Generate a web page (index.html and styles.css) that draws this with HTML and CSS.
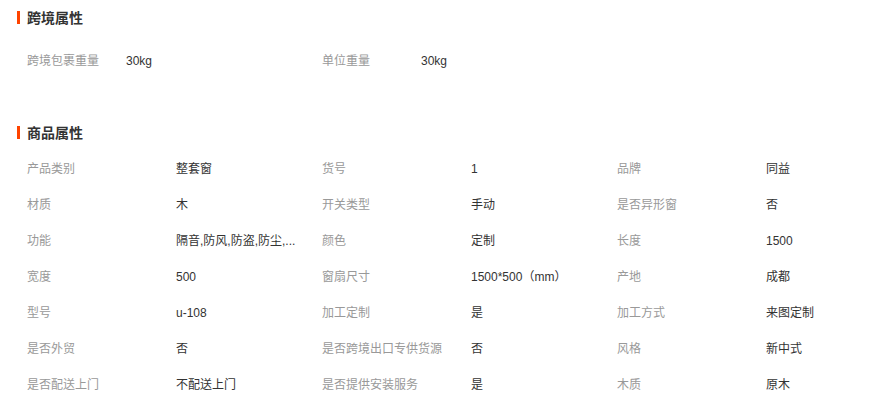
FILE: index.html
```html
<!DOCTYPE html>
<html lang="zh-CN">

<head>
    <meta charset="UTF-8">
    <title>商品属性</title>
    <link rel="stylesheet" href="styles.css">
</head>

<body>
    <div class="section">
        <h3 class="title">跨境属性</h3>
        <div class="attr-list cross">
            <div class="attr"><span class="label">跨境包裹重量</span><span class="value">30kg</span></div>
            <div class="attr"><span class="label">单位重量</span><span class="value">30kg</span></div>
        </div>
    </div>

    <div class="section">
        <h3 class="title">商品属性</h3>
        <div class="attr-list">
            <div class="attr"><span class="label">产品类别</span><span class="value">整套窗</span></div>
            <div class="attr"><span class="label">货号</span><span class="value">1</span></div>
            <div class="attr"><span class="label">品牌</span><span class="value">同益</span></div>

            <div class="attr"><span class="label">材质</span><span class="value">木</span></div>
            <div class="attr"><span class="label">开关类型</span><span class="value">手动</span></div>
            <div class="attr"><span class="label">是否异形窗</span><span class="value">否</span></div>

            <div class="attr"><span class="label">功能</span><span class="value" title="隔音,防风,防盗,防尘,防水,保温">隔音,防风,防盗,防尘,...</span></div>
            <div class="attr"><span class="label">颜色</span><span class="value">定制</span></div>
            <div class="attr"><span class="label">长度</span><span class="value">1500</span></div>

            <div class="attr"><span class="label">宽度</span><span class="value">500</span></div>
            <div class="attr"><span class="label">窗扇尺寸</span><span class="value">1500*500（mm）</span></div>
            <div class="attr"><span class="label">产地</span><span class="value">成都</span></div>

            <div class="attr"><span class="label">型号</span><span class="value">u-108</span></div>
            <div class="attr"><span class="label">加工定制</span><span class="value">是</span></div>
            <div class="attr"><span class="label">加工方式</span><span class="value">来图定制</span></div>

            <div class="attr"><span class="label">是否外贸</span><span class="value">否</span></div>
            <div class="attr"><span class="label">是否跨境出口专供货源</span><span class="value">否</span></div>
            <div class="attr"><span class="label">风格</span><span class="value">新中式</span></div>

            <div class="attr"><span class="label">是否配送上门</span><span class="value">不配送上门</span></div>
            <div class="attr"><span class="label">是否提供安装服务</span><span class="value">是</span></div>
            <div class="attr"><span class="label">木质</span><span class="value">原木</span></div>
        </div>
    </div>
</body>

</html>
```

FILE: styles.css
```css
body {
    margin: 0;
    background: #fff;
    color: #333;
    font-family: "Liberation Sans", "Noto Sans CJK SC", sans-serif;
    font-size: 12px;
}

.section {
    padding-left: 17px;
}

.section + .section {
    margin-top: 36px;
}

.title {
    display: flex;
    align-items: center;
    gap: 7px;
    height: 34px;
    margin: 0;
    font-size: 14px;
    font-weight: bold;
    color: #333;
}

.title::before {
    content: "";
    width: 3px;
    height: 13px;
    background: #ff4400;
}

.attr-list {
    display: grid;
    grid-template-columns: repeat(3, 295px);
    margin-top: 2px;
    padding-left: 10px;
}

.cross {
    margin-top: 9px;
}

.attr {
    display: flex;
    align-items: baseline;
    height: 36px;
    line-height: 36px;
}

.label {
    width: 149px;
    flex-shrink: 0;
    color: #999;
}

.cross .label {
    width: 99px;
}

.value {
    white-space: nowrap;
    color: #333;
}
```
